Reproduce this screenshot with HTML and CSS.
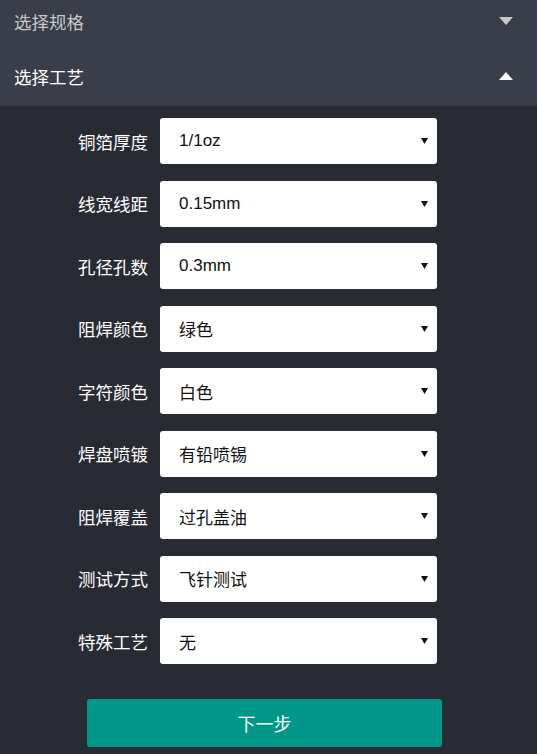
FILE: index.html
```html
<!DOCTYPE html>
<html lang="zh-CN">
<head>
<meta charset="utf-8">
<title>选择工艺</title>
<link rel="stylesheet" href="styles.css">
</head>
<body>
<div class="page">
  <div class="acc-head acc-closed">
    <span class="acc-title">选择规格</span>
    <svg class="acc-arrow" width="14" height="8" viewBox="0 0 14 8"><polygon points="0,0 14,0 7,8" fill="currentColor"/></svg>
  </div>
  <div class="acc-head acc-open">
    <span class="acc-title">选择工艺</span>
    <svg class="acc-arrow" width="14" height="8" viewBox="0 0 14 8"><polygon points="0,8 14,8 7,0" fill="currentColor"/></svg>
  </div>
  <div class="form">
    <div class="row"><label class="lbl">铜箔厚度</label><div class="sel"><span class="val">1/1oz</span><svg class="caret" width="7" height="6" viewBox="0 0 7 6"><polygon points="0,0 7,0 3.5,6" fill="#111"/></svg></div></div>
    <div class="row"><label class="lbl">线宽线距</label><div class="sel"><span class="val">0.15mm</span><svg class="caret" width="7" height="6" viewBox="0 0 7 6"><polygon points="0,0 7,0 3.5,6" fill="#111"/></svg></div></div>
    <div class="row"><label class="lbl">孔径孔数</label><div class="sel"><span class="val">0.3mm</span><svg class="caret" width="7" height="6" viewBox="0 0 7 6"><polygon points="0,0 7,0 3.5,6" fill="#111"/></svg></div></div>
    <div class="row"><label class="lbl">阻焊颜色</label><div class="sel"><span class="val">绿色</span><svg class="caret" width="7" height="6" viewBox="0 0 7 6"><polygon points="0,0 7,0 3.5,6" fill="#111"/></svg></div></div>
    <div class="row"><label class="lbl">字符颜色</label><div class="sel"><span class="val">白色</span><svg class="caret" width="7" height="6" viewBox="0 0 7 6"><polygon points="0,0 7,0 3.5,6" fill="#111"/></svg></div></div>
    <div class="row"><label class="lbl">焊盘喷镀</label><div class="sel"><span class="val">有铅喷锡</span><svg class="caret" width="7" height="6" viewBox="0 0 7 6"><polygon points="0,0 7,0 3.5,6" fill="#111"/></svg></div></div>
    <div class="row"><label class="lbl">阻焊覆盖</label><div class="sel"><span class="val">过孔盖油</span><svg class="caret" width="7" height="6" viewBox="0 0 7 6"><polygon points="0,0 7,0 3.5,6" fill="#111"/></svg></div></div>
    <div class="row"><label class="lbl">测试方式</label><div class="sel"><span class="val">飞针测试</span><svg class="caret" width="7" height="6" viewBox="0 0 7 6"><polygon points="0,0 7,0 3.5,6" fill="#111"/></svg></div></div>
    <div class="row"><label class="lbl">特殊工艺</label><div class="sel"><span class="val">无</span><svg class="caret" width="7" height="6" viewBox="0 0 7 6"><polygon points="0,0 7,0 3.5,6" fill="#111"/></svg></div></div>
  </div>
  <div class="actions"><button class="next">下一步</button></div>
</div>
</body>
</html>
```
FILE: styles.css
```css
html, body {
  margin: 0;
  padding: 0;
  background: #292b34;
}
body {
  font-family: "Liberation Sans", "Noto Sans CJK SC", sans-serif;
}
.page {
  width: 537px;
  height: 754px;
  overflow: hidden;
  background: #292b34;
}
.acc-head {
  display: flex;
  align-items: center;
  justify-content: space-between;
  background: #3a3d4a;
  padding: 0 24px 0 14px;
  font-family: "Noto Sans CJK SC", sans-serif;
  font-size: 17.5px;
}
.acc-closed {
  height: 42px;
  color: #c6c8cc;
}
.acc-open {
  height: 60px;
  padding-top: 4px;
  color: #ffffff;
}
.acc-arrow {
  display: block;
}
.form {
  padding-top: 12px;
  display: flex;
  flex-direction: column;
  gap: 16.5px;
}
.row {
  display: flex;
  align-items: center;
  padding-left: 60px;
}
.lbl {
  width: 88px;
  margin-right: 12px;
  text-align: right;
  color: #ffffff;
  font-family: "Noto Sans CJK SC", sans-serif;
  font-size: 17.5px;
}
.sel {
  width: 277px;
  height: 46px;
  box-sizing: border-box;
  background: #ffffff;
  border-radius: 3px;
  display: flex;
  align-items: center;
  justify-content: space-between;
  padding: 0 9px 0 19px;
}
.val {
  font-family: "Liberation Sans", "Noto Sans CJK SC", sans-serif;
  font-size: 17px;
  color: #111;
}
.caret {
  display: block;
}
.actions {
  padding: 35px 0 0 87px;
}
.next {
  width: 355px;
  height: 48px;
  border: none;
  border-radius: 3px;
  background: #009688;
  color: #ffffff;
  font-family: "Noto Sans CJK SC", sans-serif;
  font-size: 18px;
  padding: 0;
}
```
